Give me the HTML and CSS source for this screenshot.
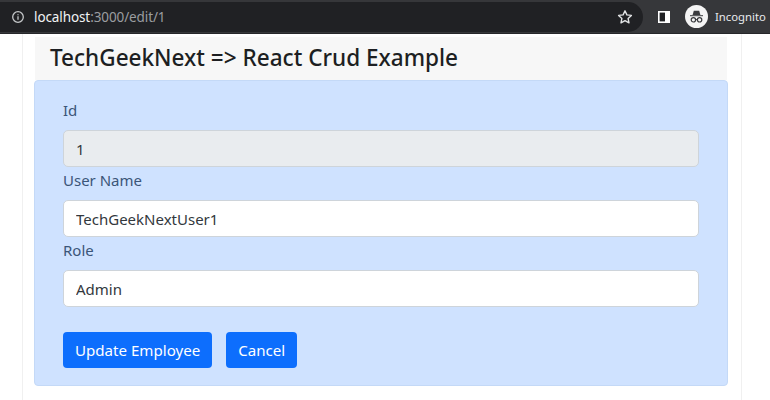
FILE: index.html
```html
<!DOCTYPE html>
<html lang="en">
<head>
<meta charset="utf-8">
<title>TechGeekNext</title>
<link rel="stylesheet" href="styles.css">
</head>
<body>
<header class="chrome">
  <div class="omnibox">
    <svg class="info" width="14" height="14" viewBox="0 0 14 14"><circle cx="7" cy="7" r="5.3" fill="none" stroke="#c4c7c9" stroke-width="1.3"/><path d="M7 6.2v3.6M7 4.2v1.1" stroke="#c4c7c9" stroke-width="1.3"/></svg>
    <span class="url"><span class="host">localhost</span>:3000/edit/1</span>
    <svg class="star" width="16" height="16" viewBox="0 0 16 16"><path d="M8 1.8l1.9 4.1 4.5.5-3.3 3 .9 4.4L8 11.6l-4 2.2.9-4.4-3.3-3 4.5-.5z" fill="none" stroke="#e3e5e6" stroke-width="1.4" stroke-linejoin="round"/></svg>
  </div>
  <svg class="panel" width="14" height="14" viewBox="0 0 14 14"><rect x="1" y="1" width="12" height="12" fill="#fff"/><rect x="2.6" y="2.6" width="5.4" height="8.8" fill="#202124"/></svg>
  <svg class="avatar" width="23" height="23" viewBox="0 0 23 23"><circle cx="11.5" cy="11.5" r="11.5" fill="#f4f4f4"/><path d="M5 10.2h13v1H5z" fill="#3a3b3e"/><path d="M7.6 10l1.2-4.2h5.4L15.4 10z" fill="#3a3b3e"/><circle cx="8.4" cy="14.8" r="2.2" fill="none" stroke="#3a3b3e" stroke-width="1.2"/><circle cx="14.6" cy="14.8" r="2.2" fill="none" stroke="#3a3b3e" stroke-width="1.2"/><path d="M10.6 14.6h1.8" stroke="#3a3b3e" stroke-width="1"/></svg>
  <span class="mode">Incognito</span>
</header>
<div class="page">
  <main class="container">
    <h1 class="title">TechGeekNext =&gt; React Crud Example</h1>
    <form class="card">
      <label class="label" for="f-id">Id</label>
      <input class="field field-disabled" id="f-id" value="1" disabled>
      <label class="label" for="f-name">User Name</label>
      <input class="field" id="f-name" value="TechGeekNextUser1">
      <label class="label" for="f-role">Role</label>
      <input class="field" id="f-role" value="Admin">
      <div class="actions">
        <button class="btn" type="button">Update Employee</button>
        <button class="btn" type="button">Cancel</button>
      </div>
    </form>
  </main>
</div>
</body>
</html>
```
FILE: styles.css
```css
* { box-sizing: border-box; }
html, body { margin: 0; height: 100%; overflow: hidden; }
body { background: #fff; font-family: "Noto Sans", "Open Sans", sans-serif; color: #212529; }

.chrome {
  height: 34px;
  background: #36373a;
  display: flex;
  align-items: center;
  border-bottom: 1px solid #26272a;
}
.omnibox {
  width: 643px;
  height: 30px;
  background: #202124;
  border-radius: 0 15px 15px 0;
  display: flex;
  align-items: center;
  padding: 0 10px 0 11px;
}
.info { flex: none; }
.url { margin-left: 9px; font-size: 13.5px; color: #9b9da0; flex: 1; letter-spacing: -0.1px; }
.host { color: #f1f3f4; }
.panel { margin-left: 14px; }
.avatar { margin-left: 14px; }
.mode { margin-left: 7px; font-size: 11.3px; color: #e8eaed; }

.page { padding: 0 28px 0 22px; }
.container {
  width: 720px;
  height: 366px;
  border-left: 1px solid #f0f0f0;
  border-right: 1px solid #f0f0f0;
  padding: 3px 13px 0 11px;
}
.title {
  margin: 0 1px;
  height: 43px;
  background: #f7f7f7;
  padding: 0 15px;
  font-size: 22.55px;
  font-weight: 500;
  line-height: 41px;
  color: #1d1f22;
}
.card {
  height: 306px;
  background: #cfe2ff;
  border: 1px solid #c4d9f7;
  border-radius: 4px;
  padding: 19px 28px 0;
  display: flex;
  flex-direction: column;
}
.label {
  height: 30px;
  font-size: 15px;
  line-height: 21px;
  color: #3b5578;
}
.field {
  height: 37px;
  flex: none;
  margin-bottom: 3px;
  border: 1px solid #ced4da;
  border-radius: 5px;
  background: #fff;
  padding: 0 12px;
  font: inherit;
  font-size: 15px;
  color: #33383d;
}
.field-disabled { background: #e9ecef; color: #33383d; opacity: 1; }
.actions { display: flex; gap: 14px; margin-top: 22px; }
.btn {
  height: 36px;
  padding: 0 12px;
  background: #0d6efd;
  color: #fff;
  border: 0;
  border-radius: 4px;
  font: inherit;
  font-size: 15.1px;
}
```
